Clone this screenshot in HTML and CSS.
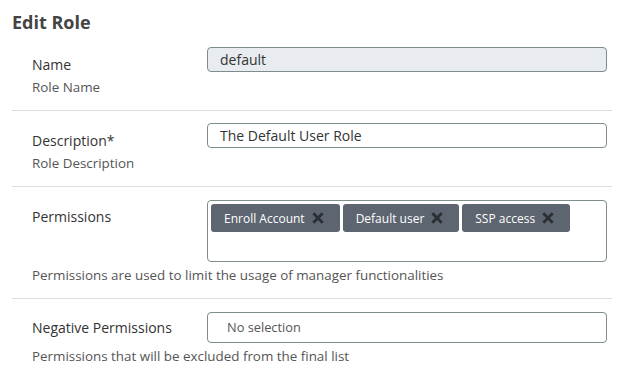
FILE: index.html
```html
<!DOCTYPE html>
<html lang="en">
<head>
  <meta charset="UTF-8">
  <meta name="viewport" content="width=device-width, initial-scale=1.0">
  <title>Edit Role</title>
  <link rel="stylesheet" href="styles.css">
</head>
<body>
  <div class="page">
    <h1 class="title">Edit Role</h1>

    <div class="section">
      <div class="field">
        <div class="field-label">
          <div class="label">Name</div>
          <div class="sub">Role Name</div>
        </div>
        <input type="text" class="text-input readonly" value="default" disabled>
      </div>
    </div>

    <div class="section">
      <div class="field">
        <div class="field-label">
          <div class="label">Description*</div>
          <div class="sub">Role Description</div>
        </div>
        <input type="text" class="text-input" value="The Default User Role">
      </div>
    </div>

    <div class="section">
      <div class="field">
        <div class="field-label">
          <div class="label">Permissions</div>
        </div>
        <div class="multi-select">
          <span class="tag">Enroll Account
            <svg class="tag-x" viewBox="0 0 12 12"><path d="M2 2L10 10M10 2L2 10"/></svg>
          </span>
          <span class="tag">Default user
            <svg class="tag-x" viewBox="0 0 12 12"><path d="M2 2L10 10M10 2L2 10"/></svg>
          </span>
          <span class="tag">SSP access
            <svg class="tag-x" viewBox="0 0 12 12"><path d="M2 2L10 10M10 2L2 10"/></svg>
          </span>
        </div>
      </div>
      <div class="help">Permissions are used to limit the usage of manager functionalities</div>
    </div>

    <div class="section last">
      <div class="field">
        <div class="field-label small-top">
          <div class="label">Negative Permissions</div>
        </div>
        <div class="select-box">No selection</div>
      </div>
      <div class="help">Permissions that will be excluded from the final list</div>
    </div>
  </div>
</body>
</html>
```

FILE: styles.css
```css
body {
  margin: 0;
  font-family: "Open Sans", "Liberation Sans", sans-serif;
  color: #333;
  background: #fff;
}
.page {
  padding: 0 8px 0 12px;
}
.title {
  margin: 0;
  padding-top: 10px;
  font-size: 18px;
  line-height: 25px;
  height: 25px;
  font-weight: 700;
  color: #444;
}
.section {
  padding: 12px 0 12px 20px;
  border-bottom: 1px solid #ddd;
}
.section.last {
  border-bottom: none;
}
.field {
  display: grid;
  grid-template-columns: 175px 400px;
  align-items: start;
}
.field-label {
  padding-top: 7px;
}
.field-label.small-top {
  padding-top: 6px;
}
.label {
  font-size: 14px;
  line-height: 22px;
  color: #333;
}
.sub {
  font-size: 13.4px;
  line-height: 22px;
  color: #555;
}
.text-input {
  box-sizing: border-box;
  width: 400px;
  height: 25px;
  margin: 0;
  padding: 0 12px;
  border: 1px solid #7f8c8c;
  border-radius: 4px;
  background: #fff;
  font-family: inherit;
  font-size: 14px;
  color: #333;
}
.text-input.readonly {
  background: #e8ebef;
  color: #333;
}
.multi-select {
  box-sizing: border-box;
  width: 400px;
  height: 62px;
  margin-top: 1px;
  padding: 3px;
  border: 1px solid #7f8c8c;
  border-radius: 4px;
  display: flex;
  flex-wrap: wrap;
  align-content: flex-start;
  gap: 3px;
}
.tag {
  display: inline-flex;
  align-items: center;
  height: 28px;
  padding: 0 15px 0 13px;
  border-radius: 3px;
  background: #5d6670;
  color: #fff;
  font-size: 12px;
}
.tag-x {
  width: 14px;
  height: 14px;
  margin-left: 6px;
  fill: none;
  stroke: #2b2f33;
  stroke-width: 2.4;
}
.select-box {
  box-sizing: border-box;
  width: 400px;
  height: 31px;
  margin-top: 1px;
  padding: 0 19px;
  border: 1px solid #7f8c8c;
  border-radius: 4px;
  font-size: 12.8px;
  line-height: 29px;
  color: #555;
}
.help {
  margin-top: 2px;
  font-size: 13.4px;
  line-height: 22px;
  color: #555;
}
```
